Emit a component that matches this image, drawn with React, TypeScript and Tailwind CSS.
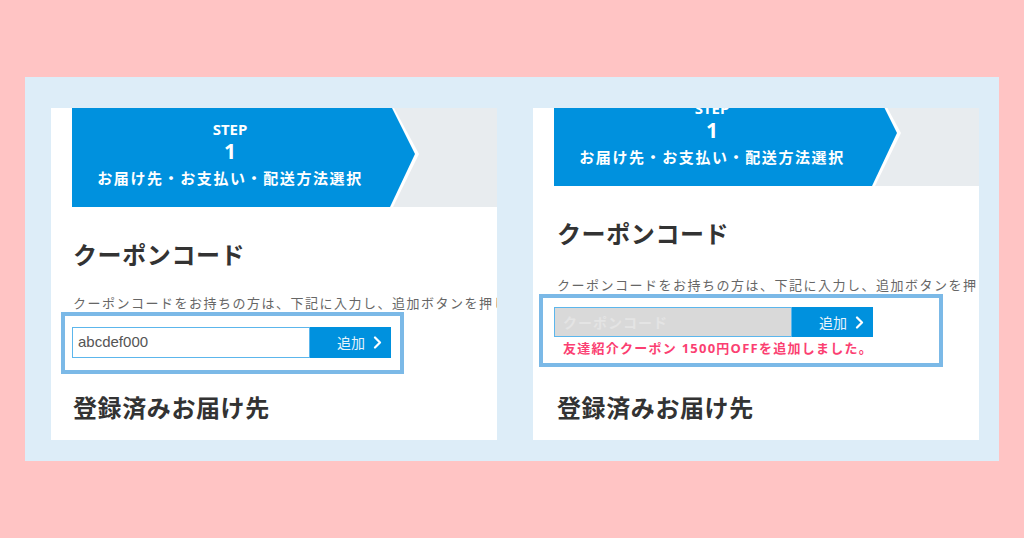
import React from 'react'

const font = { fontFamily: '"Noto Sans", "Noto Sans CJK JP", sans-serif' }

function StepBanner({ shift }: { shift: string }) {
  return (
    <div className={`ml-[21px] h-[99px] shrink-0 bg-[#e8ecef] ${shift}`}>
      <div className="h-full w-[347px] bg-white [clip-path:polygon(0_0,322px_0,347px_46px,321px_99px,0_99px)]">
        <div className="flex h-full w-[343px] flex-col items-center bg-[#0091de] pr-[27px] text-white [clip-path:polygon(0_0,320px_0,343px_46px,318px_99px,0_99px)]">
          <p className="mt-[12px] text-[15px] leading-[19px] font-bold">STEP</p>
          <p className="mt-[1px] text-[21px] leading-[22px] font-bold">1</p>
          <p className="mt-[6px] text-[15px] leading-[20px] font-bold tracking-[1.6px] whitespace-nowrap">
            お届け先・お支払い・配送方法選択
          </p>
        </div>
      </div>
    </div>
  )
}

function AddButton() {
  return (
    <button className="flex h-full w-[81px] shrink-0 items-center justify-end gap-[8px] bg-[#0091de] pr-[9px] text-[14px] text-[#e6f3fb]">
      <span>追加</span>
      <svg width="9" height="13" viewBox="0 0 9 13" fill="none">
        <path d="M2 1.5 L7 6.5 L2 11.5" stroke="#ffffff" strokeWidth="2.2" strokeLinecap="round" strokeLinejoin="round" />
      </svg>
    </button>
  )
}

function Heading({ children, className }: { children: React.ReactNode; className: string }) {
  return (
    <h2 className={`text-[24px] leading-[32px] font-bold tracking-[0.6px] text-[#333] whitespace-nowrap ${className}`}>
      {children}
    </h2>
  )
}

function Description({ className }: { className: string }) {
  return (
    <p className={`text-[13px] leading-[18px] tracking-[1.5px] text-[#666] whitespace-nowrap ${className}`}>
      クーポンコードをお持ちの方は、下記に入力し、追加ボタンを押してください。
    </p>
  )
}

export default function App() {
  return (
    <div className="h-[538px] w-[1024px] overflow-hidden bg-[#ffc4c4] pt-[77px] pl-[25px]" style={font}>
      <div className="flex h-[384px] w-[974px] gap-[36px] bg-[#ddedf8] pt-[31px] pl-[26px]">
        {/* Before */}
        <div className="flex h-[332px] w-[446px] flex-col overflow-hidden bg-white">
          <StepBanner shift="" />
          <div className="flex flex-col pl-[22px]">
            <Heading className="mt-[32px]">クーポンコード</Heading>
            <Description className="mt-[23px]" />
            <div className="-ml-[12px] w-[343px] border-4 border-[#7bb9e7] bg-white pt-[11px] pb-[12px] pl-[7px]">
              <div className="flex h-[31px]">
                <div className="flex w-[238px] items-center border border-[#5cb6ec] bg-white pl-[5px] text-[15px] text-[#555]" style={{ fontFamily: '"Liberation Sans", Arial, sans-serif' }}>
                  abcdef000
                </div>
                <AddButton />
              </div>
            </div>
            <Heading className="mt-[18px]">登録済みお届け先</Heading>
          </div>
        </div>

        {/* After */}
        <div className="flex h-[332px] w-[446px] flex-col overflow-hidden bg-white">
          <StepBanner shift="-mt-[21px]" />
          <div className="flex flex-col pl-[24px]">
            <Heading className="mt-[32px]">クーポンコード</Heading>
            <Description className="mt-[26px]" />
            <div className="-ml-[18px] w-[404px] border-4 border-[#7bb9e7] bg-white pt-[9px] pb-[6px] pl-[11px]">
              <div className="flex h-[30px]">
                <div className="flex w-[238px] items-center border border-[#5cb6ec] bg-[#d9d9d9] pl-[8px] text-[14px] font-bold tracking-[1px] text-[#e4e4e4]">
                  クーポンコード
                </div>
                <AddButton />
              </div>
              <p className="mt-[2px] pl-[9px] text-[13px] leading-[18px] font-bold tracking-[1.25px] text-[#fb3f72] whitespace-nowrap">
                友達紹介クーポン 1500円OFFを追加しました。
              </p>
            </div>
            <Heading className="mt-[25px]">登録済みお届け先</Heading>
          </div>
        </div>
      </div>
    </div>
  )
}
